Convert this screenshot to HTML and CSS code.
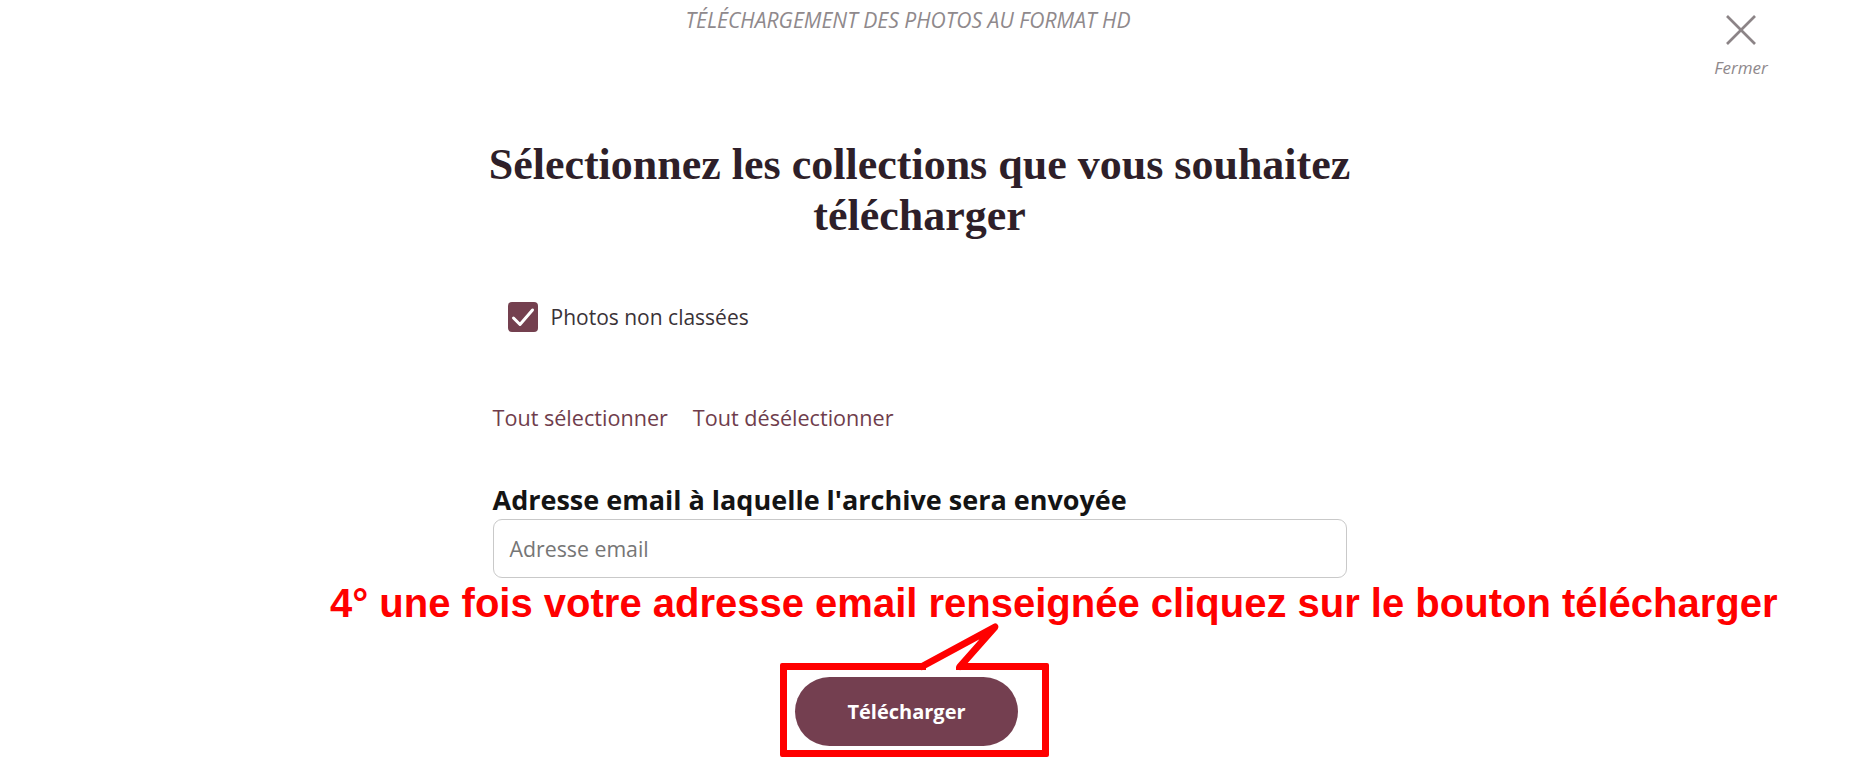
FILE: index.html
```html
<!DOCTYPE html>
<html lang="fr">
<head>
<meta charset="utf-8">
<title>Téléchargement des photos</title>
<link rel="stylesheet" href="styles.css">
</head>
<body>
<div class="page">
  <header class="topbar">
    <div class="topbar-title">TÉLÉCHARGEMENT DES PHOTOS AU FORMAT HD</div>
    <button class="close" type="button">
      <svg class="close-icon" width="32" height="30" viewBox="0 0 32 30" aria-hidden="true">
        <line x1="2" y1="1" x2="30" y2="29"/>
        <line x1="30" y1="1" x2="2" y2="29"/>
      </svg>
      <span class="close-label">Fermer</span>
    </button>
  </header>

  <main class="content">
    <h1 class="heading">Sélectionnez les collections que vous souhaitez télécharger</h1>

    <div class="form">
      <label class="check-row">
        <span class="checkbox">
          <svg width="30" height="30" viewBox="0 0 30 30" aria-hidden="true">
            <polyline points="5.5,16 12,22.5 24.5,8"/>
          </svg>
        </span>
        <span class="check-label">Photos non classées</span>
      </label>

      <div class="links">
        <a class="link">Tout sélectionner</a>
        <a class="link">Tout désélectionner</a>
      </div>

      <div class="field-label">Adresse email à laquelle l'archive sera envoyée</div>
      <div class="input">Adresse email</div>
    </div>

    <div class="annotation">4° une fois votre adresse email renseignée cliquez sur le bouton télécharger</div>

    <div class="callout">
      <svg class="callout-tail" width="269" height="56" viewBox="0 0 269 56" aria-hidden="true">
        <polygon class="tail-fill" points="142,48.5 215,9 180,48.5"/>
        <rect class="tail-fill" x="146" y="43" width="30" height="11"/>
        <polyline class="tail-line" points="142,48.5 215,9 180,48.5"/>
      </svg>
      <button class="download" type="button">Télécharger</button>
    </div>
  </main>
</div>
</body>
</html>
```

FILE: styles.css
```css
* { box-sizing: border-box; }

html, body {
  margin: 0;
  padding: 0;
  background: #ffffff;
}

body {
  font-family: "Open Sans", "Liberation Sans", sans-serif;
  width: 1851px;
  height: 781px;
  overflow: hidden;
}

.page {
  position: relative;
  width: 1851px;
  height: 781px;
}

.topbar {
  height: 139px;
  padding-top: 6px;
}

.topbar-title {
  width: 1816px;
  text-align: center;
  font-style: italic;
  font-size: 21.1px;
  line-height: 28px;
  color: #8f898c;
}

.close {
  position: absolute;
  top: 15px;
  left: 1701px;
  width: 80px;
  padding: 0;
  border: 0;
  background: none;
  display: flex;
  flex-direction: column;
  align-items: center;
  font-family: inherit;
  cursor: pointer;
}

.close-icon line {
  stroke: #8c8487;
  stroke-width: 2.6;
}

.close-label {
  margin-top: 11px;
  font-style: italic;
  font-size: 17px;
  line-height: 24px;
  color: #8f898c;
}

.content {
  width: 1839px;
  display: flex;
  flex-direction: column;
}

.heading {
  margin: 0 auto;
  width: 1000px;
  text-align: center;
  font-family: "Liberation Serif", "Times New Roman", serif;
  font-weight: bold;
  font-size: 44px;
  line-height: 51px;
  color: #2e1f29;
}

.form {
  width: 854px;
  margin: 0 auto;
  display: flex;
  flex-direction: column;
}

.check-row {
  margin-top: 61px;
  margin-left: 15px;
  display: flex;
  align-items: center;
  gap: 13px;
  height: 30px;
}

.checkbox {
  width: 30px;
  height: 30px;
  border-radius: 4px;
  background: #74404f;
  display: block;
}

.checkbox svg { display: block; }

.checkbox polyline {
  fill: none;
  stroke: #ffffff;
  stroke-width: 3;
  stroke-linecap: round;
  stroke-linejoin: round;
}

.check-label {
  font-size: 21px;
  line-height: 27px;
  color: #3a3237;
}

.links {
  margin-top: 72px;
  display: flex;
  gap: 25px;
  font-size: 21.6px;
  line-height: 27px;
}

.link {
  color: #6f3d4c;
  cursor: pointer;
}

.field-label {
  margin-top: 54px;
  font-weight: bold;
  font-size: 27px;
  line-height: 30px;
  color: #141414;
}

.input {
  margin-top: 4px;
  height: 59px;
  border: 1px solid #c9c9c9;
  border-radius: 9px;
  padding-left: 16px;
  display: flex;
  align-items: center;
  font-size: 21.3px;
  color: #767676;
}

.annotation {
  margin-top: 6px;
  margin-left: 330px;
  white-space: nowrap;
  font-family: "Liberation Sans", Arial, sans-serif;
  font-weight: bold;
  font-size: 40px;
  line-height: 39px;
  color: #ff0000;
}

.callout {
  position: relative;
  margin-top: 40px;
  margin-left: 780px;
  width: 269px;
  height: 94px;
  border: 7px solid #ff0000;
  border-radius: 2px;
  padding: 7px 0 0 8px;
}

.callout-tail {
  position: absolute;
  left: -7px;
  top: -52px;
}

.tail-fill {
  fill: #ffffff;
  stroke: none;
}

.tail-line {
  fill: none;
  stroke: #ff0000;
  stroke-width: 7;
  stroke-linejoin: round;
  stroke-linecap: round;
}

.download {
  width: 223px;
  height: 69px;
  border: 0;
  border-radius: 35px;
  background: #743f50;
  color: #ffffff;
  font-family: "Open Sans", "Liberation Sans", sans-serif;
  font-weight: bold;
  font-size: 20px;
  padding: 0;
  cursor: pointer;
}
```
